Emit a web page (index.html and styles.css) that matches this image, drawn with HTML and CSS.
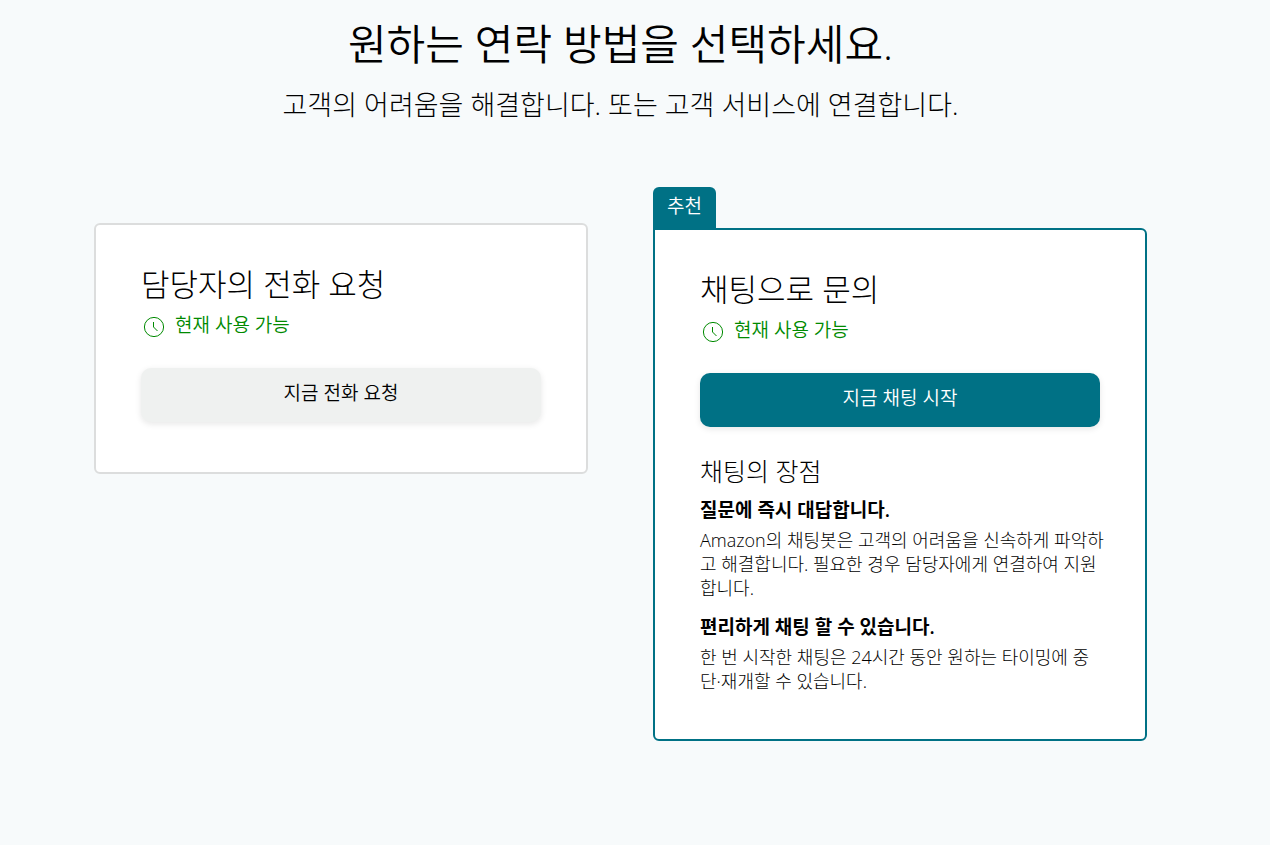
FILE: index.html
```html
<!DOCTYPE html>
<html lang="ko">
<head>
    <meta charset="UTF-8">
    <meta name="viewport" content="width=device-width, initial-scale=1.0">
    <title>연락 방법 선택</title>
    <link rel="stylesheet" href="styles.css">
</head>
<body>

<main class="page">
    <h1>원하는 연락 방법을 선택하세요.</h1>
    <p class="subtitle">고객의 어려움을 해결합니다. 또는 고객 서비스에 연결합니다.</p>

    <div class="options">
        <section class="option phone">
            <div class="card">
                <h2>담당자의 전화 요청</h2>
                <p class="status">
                    <svg class="clock" viewBox="0 0 22 22" aria-hidden="true">
                        <circle cx="11" cy="11" r="9.6"/>
                        <path d="M10.5 6v5l4 4"/>
                    </svg>
                    <span>현재 사용 가능</span>
                </p>
                <button type="button" class="btn">지금 전화 요청</button>
            </div>
        </section>

        <section class="option chat">
            <span class="tag">추천</span>
            <div class="card recommended">
                <h2>채팅으로 문의</h2>
                <p class="status">
                    <svg class="clock" viewBox="0 0 22 22" aria-hidden="true">
                        <circle cx="11" cy="11" r="9.6"/>
                        <path d="M10.5 6v5l4 4"/>
                    </svg>
                    <span>현재 사용 가능</span>
                </p>
                <button type="button" class="btn primary">지금 채팅 시작</button>

                <h3>채팅의 장점</h3>
                <h4>질문에 즉시 대답합니다.</h4>
                <p class="detail">Amazon의 채팅봇은 고객의 어려움을 신속하게 파악하<br>고 해결합니다. 필요한 경우 담당자에게 연결하여 지원<br>합니다.</p>
                <h4>편리하게 채팅 할 수 있습니다.</h4>
                <p class="detail">한 번 시작한 채팅은 24시간 동안 원하는 타이밍에 중<br>단·재개할 수 있습니다.</p>
            </div>
        </section>
    </div>
</main>

</body>
</html>
```

FILE: styles.css
```css
* {
    box-sizing: border-box;
}
body {
    margin: 0;
    background: #f7fafb;
    color: #000;
    font-family: "Open Sans", "Noto Sans CJK KR", sans-serif;
    font-weight: 300;
}
h1, h2, h3, h4, p {
    margin: 0;
    font-weight: 300;
}
.page {
    padding: 16px 123px 60px 94px;
}
h1 {
    font-size: 42px;
    font-weight: 350;
    line-height: 56px;
    text-align: center;
}
.subtitle {
    margin-top: 16px;
    font-size: 27px;
    line-height: 34px;
    text-align: center;
}
.options {
    display: flex;
    align-items: flex-start;
    gap: 65px;
    margin-top: 65px;
}
.option {
    flex: 1;
    min-width: 0;
}
.phone {
    margin-top: 36px;
}
.card {
    padding: 40px 45px 50px;
    border: 2px solid #dcdddd;
    border-radius: 6px;
    background: #fff;
}
.recommended {
    padding-bottom: 46px;
    border-color: #007185;
    border-top-left-radius: 0;
}
.tag {
    display: block;
    width: 63px;
    height: 41px;
    border-radius: 6px 6px 0 0;
    background: #007185;
    color: #fff;
    font-size: 19px;
    font-weight: 350;
    line-height: 38px;
    text-align: center;
}
h2 {
    font-size: 31px;
    line-height: 38px;
}
.status {
    display: flex;
    align-items: flex-end;
    gap: 10px;
    margin-top: 9px;
    padding-left: 2px;
    color: #008a00;
    font-size: 19px;
    font-weight: 350;
    line-height: 26px;
}
.clock {
    width: 22px;
    height: 22px;
    fill: none;
    stroke: #008a00;
}
.btn {
    width: 100%;
    height: 54px;
    margin-top: 30px;
    padding: 0 0 7px;
    border: 0;
    border-radius: 10px;
    background: #eff1f0;
    box-shadow: 0 2px 6px rgba(15, 17, 17, 0.1);
    color: #000;
    font: inherit;
    font-size: 19px;
    font-weight: 350;
}
.primary {
    background: #007185;
    color: #fff;
}
h3 {
    margin-top: 27px;
    font-size: 25px;
    line-height: 34px;
}
h4 {
    margin-top: 9px;
    font-size: 19px;
    font-weight: 600;
    line-height: 26px;
}
.detail {
    margin-top: 5px;
    font-size: 18px;
    line-height: 24px;
    white-space: nowrap;
}
.detail + h4 {
    margin-top: 14px;
}
```
